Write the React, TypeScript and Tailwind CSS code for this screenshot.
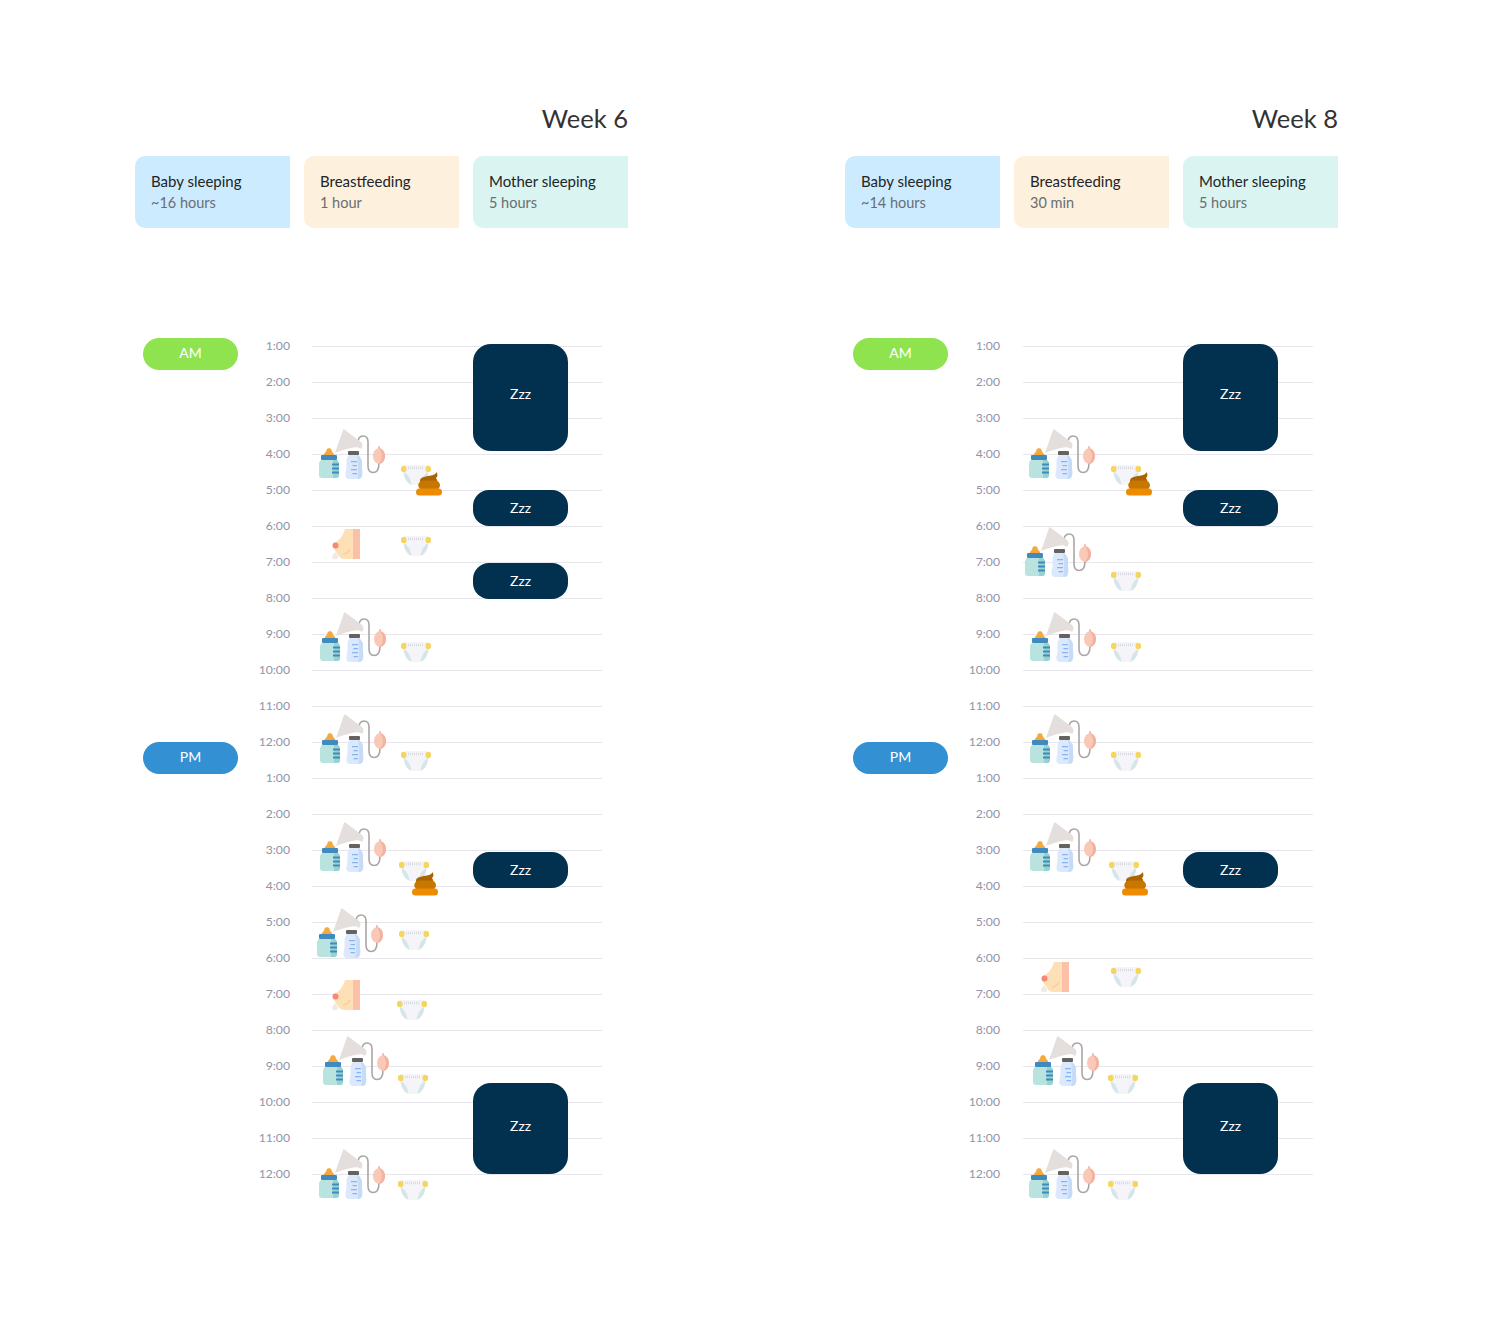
import React from 'react';

const hours = ['1:00', '2:00', '3:00', '4:00', '5:00', '6:00', '7:00', '8:00', '9:00', '10:00', '11:00', '12:00'];

// chart origin is the top left corner of the week column, 328px down the page
const PumpIcon = () => (
  <svg width="67" height="50" viewBox="0 0 67 50">
    <path d="M39 14C39 9 41 7 44 7C47 7 49 9 49 13V37C49 41 51 43.500 54 43.500C58 43.500 60 40 60 34" fill="none" stroke="#aba6a6" strokeWidth="1.600" />
    <path d="M16 24L24 1C24 0 25 0 26 1L42 13C44 15 44 18 42 20C40 18 36 18 32 19C26 20 21 22 16 24Z" fill="#e4dfdc" />
    <path d="M4.500 27C4.500 24 7 24 7.500 21C7.500 18.500 12.500 18.500 12.500 21C13 24 15.500 24 15.500 27Z" fill="#f4a93f" />
    <rect x="2" y="26" width="16" height="5" rx="1" fill="#3f8bc0" />
    <path d="M2 31H18C19 32 20 33 20 35V46C20 48 19 49 17 49H3C1 49 0 48 0 46V35C0 33 1 32 2 31Z" fill="#b9e3df" />
    <path d="M14 31H18C19 32 20 33 20 35V46C20 48 19 49 17 49H14Z" fill="#97d2cd" />
    <path d="M13 34.500H20V36.500H13ZM13 38.500H20V40.500H13ZM13 42.500H20V44.500H13Z" fill="#3f8bc0" />
    <rect x="29" y="22" width="11" height="4" rx="1" fill="#66625f" />
    <path d="M30 26H39C41 28 43 30 43 33V38C43 42 44 45 42.500 48C41.500 50 39 50 37 50H31C29 50 27 49.500 26.500 47.500C26 44 27.500 42 27.500 38V33C27.500 30 28 28 30 26Z" fill="#dce9fc" />
    <path d="M38 26H39C41 28 43 30 43 33V38C43 42 44 45 42.500 48C41.500 50 39 50 37 50H38C40 46 39 30 38 26Z" fill="#c6dbf7" />
    <path d="M32 32H38V33.200H32ZM33.500 36H38V37.200H33.500ZM32 40H38V41.200H32ZM33.500 44H38V45.200H33.500Z" fill="#87b5ee" />
    <path d="M59.500 17H60.500L61 20H59Z" fill="#f2a898" />
    <ellipse cx="60" cy="27" rx="6" ry="7.800" fill="#f9c8b6" />
    <path d="M60 19.200C63.500 19.200 66 23 66 27C66 31 63.500 34.800 60 34.800C62 32.500 63 30 63 27C63 24 62 21.500 60 19.200Z" fill="#f3b29f" />
  </svg>
);

const DiaperIcon = () => (
  <svg width="30" height="21" viewBox="0 0 30 21">
    <path d="M2.500 1H27.500V7C27.500 13 24 19.500 20 21H10C6 19.500 2.500 13 2.500 7Z" fill="#f4f4f9" />
    <path d="M2.500 8C6 9 9.500 14 10.500 20.500C6 19.500 3 14 2.500 8Z" fill="#d5e6ea" />
    <path d="M27.500 8C24 9 20.500 14 19.500 20.500C24 19.500 27 14 27.500 8Z" fill="#d5e6ea" />
    <path d="M7 4H23" stroke="#d9dbe4" strokeWidth="2.500" strokeDasharray="1 1" />
    <rect x="0" y="2" width="5.500" height="6" rx="2" fill="#f6d55f" />
    <rect x="24.500" y="2" width="5.500" height="6" rx="2" fill="#f6d55f" />
  </svg>
);

const PoopIcon = () => (
  <svg width="26" height="24" viewBox="0 0 26 24">
    <path d="M4 9C4 5 8 5 12 4C16 3.500 20 2.500 20.700 0C22 3 21.500 5 20 6C21.500 8 21.500 10 21 12H4Z" fill="#ac6400" />
    <rect x="2.300" y="8.500" width="21.700" height="9.500" rx="4.750" fill="#c77700" />
    <rect x="0" y="16.500" width="26" height="7" rx="3.500" fill="#ee8b00" />
  </svg>
);

const BreastIcon = () => (
  <svg width="28" height="31" viewBox="0 0 28 31">
    <path d="M13 0H21V30H12C8 30 5 25 2 20C0 18 1 14 3 13C7 12 11 7 13 0Z" fill="#fee0b6" />
    <rect x="21" y="0" width="7" height="30" fill="#fcbfa7" />
    <circle cx="3.500" cy="16.500" r="3" fill="#f98778" />
    <path d="M11 25C14 25 16 23.500 18 20" fill="none" stroke="#fbc892" strokeWidth="1.200" />
    <path d="M3 23C4 25 6 26 6 28C6 31 0 31 0 28C0 26 2 25 3 23Z" fill="#f1e9e5" />
  </svg>
);

type Mark = { x: number; y: number };
type Sleep = { top: number; height: number };

type Week = {
  title: string;
  baby: string;
  feeding: string;
  lineLeft: string;
  pumps: Mark[];
  diapers: Mark[];
  poops: Mark[];
  breasts: Mark[];
  sleeps: Sleep[];
};

const toMarks = (list: number[][]): Mark[] => list.map(([x, y]) => ({ x: x - 135, y: y - 328 }));

const weeks: Week[] = [
  {
    title: 'Week 6',
    baby: '~16 hours',
    feeding: '1 hour',
    lineLeft: 'ml-[22px]',
    pumps: toMarks([[319, 429], [320, 612], [320, 714], [320, 822], [317, 908], [323, 1036], [319, 1149]]),
    diapers: toMarks([[401, 464], [401, 535], [401, 641], [401, 750], [399, 860], [399, 929], [397, 999], [398, 1073], [398, 1179]]),
    poops: toMarks([[416, 472], [412, 872]]),
    breasts: toMarks([[332, 529], [332, 980]]),
    sleeps: [
      { top: 344, height: 107 },
      { top: 490, height: 36 },
      { top: 563, height: 36 },
      { top: 852, height: 36 },
      { top: 1083, height: 91 },
    ],
  },
  {
    title: 'Week 8',
    baby: '~14 hours',
    feeding: '30 min',
    lineLeft: 'ml-[23px]',
    pumps: toMarks([[319, 429], [315, 527], [320, 612], [320, 714], [320, 822], [323, 1036], [319, 1149]]),
    diapers: toMarks([[401, 464], [401, 570], [401, 641], [401, 750], [399, 860], [401, 966], [398, 1073], [398, 1179]]),
    poops: toMarks([[416, 472], [412, 872]]),
    breasts: toMarks([[331, 962]]),
    sleeps: [
      { top: 344, height: 107 },
      { top: 490, height: 36 },
      { top: 852, height: 36 },
      { top: 1083, height: 91 },
    ],
  },
];

const SummaryCard = ({ title, value, color }: { title: string; value: string; color: string }) => (
  <div className={`w-[155px] h-[72px] rounded-l-[10px] pl-4 pt-[14px] ${color}`}>
    <p className="text-[15px] leading-[22px] text-[#222427]">{title}</p>
    <p className="text-[14.500px] leading-[22px] text-[#6a6d72]">{value}</p>
  </div>
);

const WeekColumn = ({ week }: { week: Week }) => (
  <section className="w-[493px]">
    <h2 className="h-[52px] text-right text-[25.500px] leading-[28px] text-[#333333]">{week.title}</h2>
    <div className="flex gap-[14px]">
      <SummaryCard title="Baby sleeping" value={week.baby} color="bg-[#cdebff]" />
      <SummaryCard title="Breastfeeding" value={week.feeding} color="bg-[#fdf0dc]" />
      <SummaryCard title="Mother sleeping" value="5 hours" color="bg-[#d9f4f1]" />
    </div>
    <div className="relative mt-[100px] flex">
      <div className="w-[103px] pl-2 pt-[10px]">
        <div className="flex h-8 w-[95px] items-center justify-center rounded-full bg-[#8fe34f] pb-1 text-[14px] text-white">AM</div>
        <div className="mt-[372px] flex h-8 w-[95px] items-center justify-center rounded-full bg-[#3290d3] pb-1 text-[14px] text-white">PM</div>
      </div>
      <div>
        {[...hours, ...hours].map((hour, i) => (
          <div key={i} className="flex h-9 items-center">
            <span className="w-[52px] pt-px text-right text-[12.200px] text-[#9293a8]">{hour}</span>
            <div className={`h-px w-[290px] bg-[#e6e6ec] ${week.lineLeft}`} />
          </div>
        ))}
      </div>
      {week.sleeps.map((s, i) => (
        <div
          key={i}
          className={`absolute left-[338px] flex w-[95px] items-center justify-center bg-[#02304f] text-[14px] text-white ${s.height > 100 ? 'rounded-[18px] pb-[8px]' : s.height > 40 ? 'rounded-[18px] pb-[6px]' : 'rounded-[16px] pb-[2px]'}`}
          style={{ top: s.top - 328, height: s.height }}
        >
          Zzz
        </div>
      ))}
      {week.pumps.map((m, i) => (
        <div key={i} className="absolute" style={{ left: m.x, top: m.y }}><PumpIcon /></div>
      ))}
      {week.breasts.map((m, i) => (
        <div key={i} className="absolute" style={{ left: m.x, top: m.y }}><BreastIcon /></div>
      ))}
      {week.diapers.map((m, i) => (
        <div key={i} className="absolute" style={{ left: m.x, top: m.y }}><DiaperIcon /></div>
      ))}
      {week.poops.map((m, i) => (
        <div key={i} className="absolute" style={{ left: m.x, top: m.y }}><PoopIcon /></div>
      ))}
    </div>
  </section>
);

export default function App() {
  return (
    <div className="flex min-h-[1322px] gap-[217px] bg-white pl-[135px] pt-[104px] font-['Lato',sans-serif]">
      {weeks.map((week) => (
        <WeekColumn key={week.title} week={week} />
      ))}
    </div>
  );
}
